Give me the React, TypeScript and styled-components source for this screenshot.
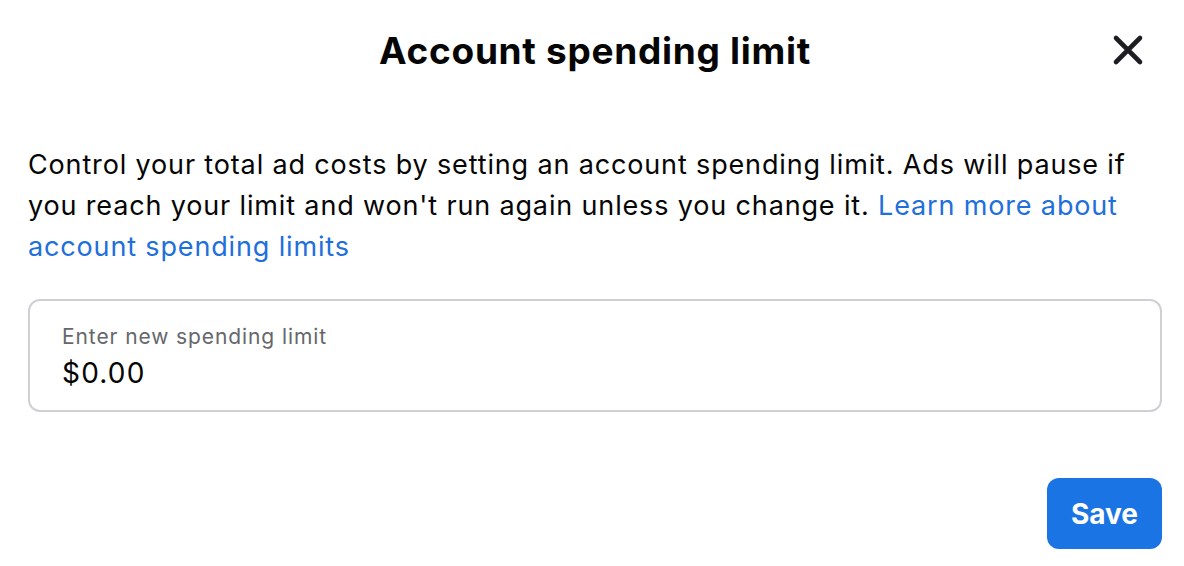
import React from "react";
import styled, { createGlobalStyle } from "styled-components";

const Global = createGlobalStyle`
  html, body { margin: 0; padding: 0; background: #ffffff; }
  body { font-family: Inter, "Liberation Sans", Arial, sans-serif; -webkit-font-smoothing: antialiased; }
  * { box-sizing: border-box; }
`;

const Dialog = styled.div`
  width: 1184px;
  height: 566px;
  background: #fff;
  padding: 0 22px 0 28px;
  display: flex;
  flex-direction: column;
`;

const Header = styled.header`
  height: 100px;
  display: grid;
  grid-template-columns: 1fr auto 1fr;
  align-items: center;
`;

const Title = styled.h1`
  grid-column: 2;
  margin: 0;
  font-size: 37px;
  font-weight: 700;
  color: #050505;
  letter-spacing: 0.7px;
`;

const CloseButton = styled.button`
  grid-column: 3;
  justify-self: end;
  margin-right: 14px;
  width: 40px;
  height: 40px;
  border: none;
  background: transparent;
  padding: 0;
  display: flex;
  align-items: center;
  justify-content: center;
  cursor: pointer;
`;

const Description = styled.p`
  margin: 44px 0 0;
  font-size: 27px;
  line-height: 41px;
  color: #050505;
  letter-spacing: 0.85px;
`;

const Link = styled.a`
  color: #216fdb;
  text-decoration: none;
`;

const Field = styled.label`
  margin-top: 32px;
  height: 113px;
  border: 2px solid #ced0d4;
  border-radius: 12px;
  padding: 22px 32px 0;
  display: flex;
  flex-direction: column;
`;

const FieldLabel = styled.span`
  font-size: 21px;
  line-height: 28px;
  color: #65676b;
  letter-spacing: 0.9px;
`;

const FieldValue = styled.span`
  margin-top: 4px;
  font-size: 28px;
  line-height: 36px;
  color: #050505;
  letter-spacing: 1.2px;
`;

const Footer = styled.div`
  margin-top: 66px;
  display: flex;
  justify-content: flex-end;
`;

const SaveButton = styled.button`
  width: 115px;
  height: 71px;
  border: none;
  border-radius: 12px;
  background: #1b74e4;
  color: #fff;
  font-family: inherit;
  font-size: 28px;
  font-weight: 700;
  cursor: pointer;
`;

export default function App() {
  return (
    <>
      <Global />
      <Dialog>
        <Header>
          <Title>Account spending limit</Title>
          <CloseButton aria-label="Close">
            <svg width="32" height="32" viewBox="0 0 32 32">
              <path
                d="M4 4 L28 28 M28 4 L4 28"
                stroke="#1c1e21"
                strokeWidth="4.6"
                strokeLinecap="round"
                fill="none"
              />
            </svg>
          </CloseButton>
        </Header>
        <Description>
          Control your total ad costs by setting an account spending limit. Ads will pause if you
          reach your limit and won't run again unless you change it.{" "}
          <Link href="#">Learn more about account spending limits</Link>
        </Description>
        <Field>
          <FieldLabel>Enter new spending limit</FieldLabel>
          <FieldValue>$0.00</FieldValue>
        </Field>
        <Footer>
          <SaveButton>Save</SaveButton>
        </Footer>
      </Dialog>
    </>
  );
}
